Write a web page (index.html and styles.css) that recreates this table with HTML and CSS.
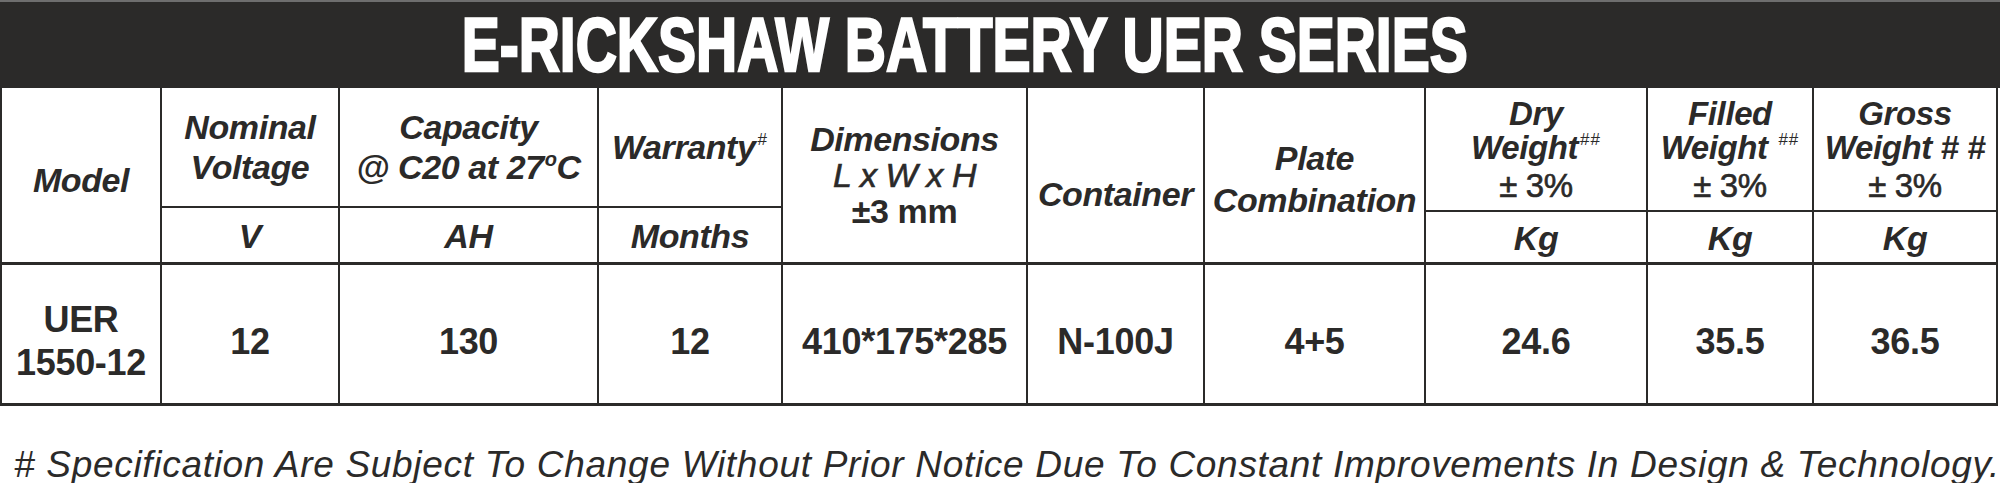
FILE: index.html
```html
<!DOCTYPE html>
<html lang="en">
<head>
<meta charset="utf-8">
<title>E-Rickshaw Battery UER Series</title>
<link rel="stylesheet" href="styles.css">
</head>
<body>
<div class="sheet">
  <h1 class="title"><span class="title-text">E-RICKSHAW BATTERY UER SERIES</span></h1>
  <div class="spec">
    <div class="c h all k1 model"><div class="t">Model</div></div>
    <div class="c h top-l k2"><div class="t">Nominal<br>Voltage</div></div>
    <div class="c h top-l k3"><div class="t">Capacity<br>@ C20 at 27<sup class="deg">o</sup>C</div></div>
    <div class="c h top-l k4 warranty"><div class="t">Warranty<sup class="hash">#</sup></div></div>
    <div class="c h all k5 dims"><div class="t"><span class="ln">Dimensions</span><span class="ln lwh">L x W x H</span><span class="ln up">±3 mm</span></div></div>
    <div class="c h all k6 container"><div class="t">Container</div></div>
    <div class="c h all k7 plate"><div class="t">Plate<br>Combination</div></div>
    <div class="c h top-r k8 weight"><div class="t"><span class="ln">Dry</span><span class="ln">Weight<sup class="hash">##</sup></span><span class="ln up pm">± 3%</span></div></div>
    <div class="c h top-r k9 weight"><div class="t"><span class="ln">Filled</span><span class="ln">Weight <sup class="hash">##</sup></span><span class="ln up pm">± 3%</span></div></div>
    <div class="c h top-r k10 weight"><div class="t"><span class="ln">Gross</span><span class="ln">Weight # #</span><span class="ln up pm">± 3%</span></div></div>

    <div class="c h unit unit-l k2"><div class="t">V</div></div>
    <div class="c h unit unit-l k3"><div class="t">AH</div></div>
    <div class="c h unit unit-l k4"><div class="t">Months</div></div>
    <div class="c h unit unit-r k8"><div class="t">Kg</div></div>
    <div class="c h unit unit-r k9"><div class="t">Kg</div></div>
    <div class="c h unit unit-r k10"><div class="t">Kg</div></div>

    <div class="c d k1 model-id"><div class="t">UER<br>1550-12</div></div>
    <div class="c d k2"><div class="t">12</div></div>
    <div class="c d k3"><div class="t">130</div></div>
    <div class="c d k4"><div class="t">12</div></div>
    <div class="c d k5"><div class="t">410*175*285</div></div>
    <div class="c d k6"><div class="t">N-100J</div></div>
    <div class="c d k7"><div class="t">4+5</div></div>
    <div class="c d k8"><div class="t">24.6</div></div>
    <div class="c d k9"><div class="t">35.5</div></div>
    <div class="c d k10"><div class="t">36.5</div></div>
  </div>
  <p class="note"># Specification Are Subject To Change Without Prior Notice Due To Constant Improvements In Design &amp; Technology.</p>
</div>
</body>
</html>
```
FILE: styles.css
```css
html, body {
  margin: 0;
  padding: 0;
  background: #ffffff;
}

.sheet {
  width: 2000px;
  font-family: "Liberation Sans", Arial, sans-serif;
  color: #2b2a29;
}

.title {
  margin: 0;
  height: 88px;
  box-sizing: border-box;
  border-top: 2px solid #6e6e6e;
  background: #2b2a29;
  display: flex;
  align-items: center;
  justify-content: center;
  padding-right: 70px;
}

.title-text {
  display: inline-block;
  font-size: 76px;
  font-weight: 700;
  line-height: 1;
  color: #ffffff;
  white-space: nowrap;
  transform: scaleX(0.75);
  -webkit-text-stroke: 2.5px #ffffff;
}

.spec {
  width: 1998px;
  display: grid;
  grid-template-columns: 160px 178px 259px 184px 245px 177px 221px 222px 166px 184px;
  grid-template-rows: 120px 4px 53px 141px;
  border-left: 2px solid #2b2a29;
  box-sizing: border-box;
}

.c {
  box-sizing: border-box;
  border-right: 2px solid #2b2a29;
  border-bottom: 2px solid #2b2a29;
  display: flex;
  align-items: center;
  justify-content: center;
  text-align: center;
}

.t {
  white-space: nowrap;
}

.ln { display: block; }

.h {
  font-size: 34px;
  font-weight: 700;
  font-style: italic;
  line-height: 40px;
  letter-spacing: -0.4px;
}

.k1 { grid-column: 1; }
.k2 { grid-column: 2; }
.k3 { grid-column: 3; }
.k4 { grid-column: 4; }
.k5 { grid-column: 5; }
.k6 { grid-column: 6; }
.k7 { grid-column: 7; }
.k8 { grid-column: 8; }
.k9 { grid-column: 9; }
.k10 { grid-column: 10; }

.all { grid-row: 1 / 4; border-bottom-width: 3px; }
.top-l { grid-row: 1 / 2; }
.unit-l { grid-row: 2 / 4; border-bottom-width: 3px; }
.top-r { grid-row: 1 / 3; }
.unit-r { grid-row: 3 / 4; border-bottom-width: 3px; }

.model { padding-top: 10px; }
.container { padding-top: 38px; }
.plate { padding-top: 8px; line-height: 42px; }
.dims { line-height: 36px; }
.lwh { font-weight: 400; -webkit-text-stroke: 0.6px #2b2a29; }
.up { font-style: normal; }

.weight { font-size: 33px; line-height: 34px; padding-top: 2px; }
.pm { margin-top: 4px; font-weight: 400; -webkit-text-stroke: 0.6px #2b2a29; }

.deg {
  font-size: 20px;
  line-height: 0;
  vertical-align: 13px;
  margin-left: 1px;
}

.hash {
  font-size: 17px;
  font-style: normal;
  font-weight: 400;
  line-height: 0;
  vertical-align: 14px;
  margin-left: 2px;
  letter-spacing: 1px;
}

.unit { padding-top: 2px; }

.d {
  grid-row: 4;
  font-size: 36px;
  font-weight: 700;
  line-height: 43px;
  padding-top: 14px;
  border-bottom-width: 3px;
  letter-spacing: -0.3px;
}

.note {
  margin: 40px 0 0 0;
  padding-left: 14px;
  font-size: 37px;
  font-style: italic;
  font-weight: 400;
  line-height: 1;
  letter-spacing: 0.7px;
  white-space: nowrap;
  color: #2b2a29;
}
```
